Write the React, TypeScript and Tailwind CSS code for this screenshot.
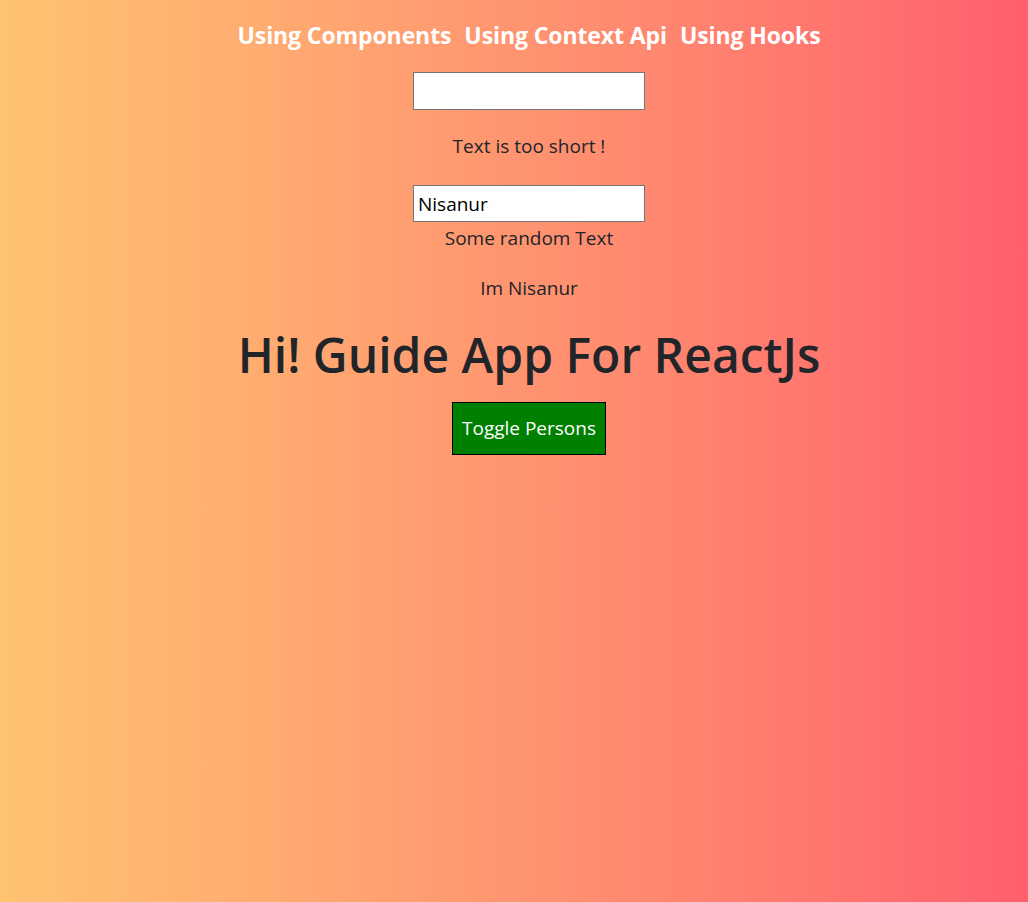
export default function App() {
  const font = { fontFamily: '"Open Sans", "Noto Sans", sans-serif' };
  return (
    <div
      className="min-h-[902px] w-full pl-[30px] bg-gradient-to-r from-[#ffc371] to-[#ff5f6d] text-[#212529] text-center"
      style={font}
    >
      <nav className="flex justify-center gap-[13px] pt-[19px] h-[52px]">
        <a className="text-white font-bold text-[23px] leading-[32px] tracking-[-0.1px]">Using Components</a>
        <a className="text-white font-bold text-[23px] leading-[32px] tracking-[-0.1px]">Using Context Api</a>
        <a className="text-white font-bold text-[23px] leading-[32px] tracking-[-0.1px]">Using Hooks</a>
      </nav>
      <div className="flex flex-col items-center pt-[20px]">
        <input
          className="w-[232px] h-[38px] bg-white border border-[#767676] px-[4px] text-[19px] text-black outline-none"
          defaultValue=""
        />
        <p className="mt-[22px] text-[19px] leading-[28px]">Text is too short !</p>
        <input
          className="mt-[25px] w-[232px] h-[37px] bg-white border border-[#767676] px-[4px] text-[19px] text-black outline-none"
          defaultValue="Nisanur"
        />
        <p className="text-[19px] leading-[32px]">Some random Text</p>
        <p className="mt-[18px] text-[19px] leading-[32px]">Im Nisanur</p>
        <h1 className="mt-[19px] text-[48px] font-semibold leading-[64px]">Hi! Guide App For ReactJs</h1>
        <button className="mt-[15px] w-[154px] h-[53px] bg-[#008000] border border-black text-white text-[19px]">
          Toggle Persons
        </button>
      </div>
    </div>
  );
}
